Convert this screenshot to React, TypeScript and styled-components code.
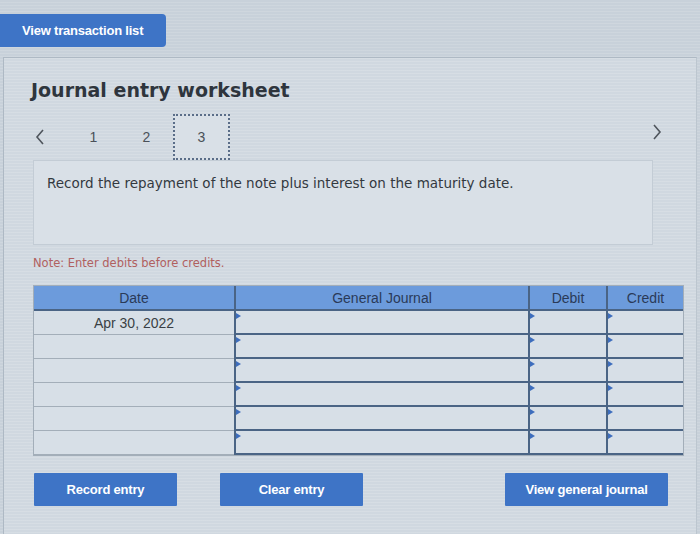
import { FC, Fragment } from "react";
import styled, { createGlobalStyle } from "styled-components";

const palette = {
  page: "#c8d1da",
  panel: "#d0d8e0",
  panelBorder: "#aeb9c4",
  box: "#d9e0e7",
  cell: "#d7dfe7",
  blue: "#3e74c6",
  header: "#6c9bdc",
  headerText: "#2a3a58",
  darkLine: "#4a6485",
  lightLine: "#a3aeb9",
  text: "#33393f",
};

const GlobalStyle = createGlobalStyle`
  html, body {
    margin: 0;
    padding: 0;
    background: ${palette.page};
    font-family: "DejaVu Sans", Verdana, sans-serif;
  }
`;

const Page = styled.div`
  width: 700px;
  height: 534px;
  overflow: hidden;
  padding-top: 14px;
  box-sizing: border-box;
  background: repeating-linear-gradient(
      0deg,
      rgba(255, 255, 255, 0.12) 0 1px,
      transparent 1px 3px
    ),
    ${palette.page};
`;

const TopButton = styled.button`
  display: block;
  width: 166px;
  height: 33px;
  border: none;
  border-radius: 0 4px 4px 0;
  background: ${palette.blue};
  color: #fff;
  font-family: "Liberation Sans", Arial, sans-serif;
  font-weight: bold;
  font-size: 13px;
  letter-spacing: -0.2px;
  text-align: left;
  padding: 0 0 0 22px;
`;

const Panel = styled.section`
  margin: 10px 0 0 3px;
  width: 694px;
  height: 480px;
  box-sizing: border-box;
  border: 1px solid ${palette.panelBorder};
  border-right-color: #bcc6cf;
  background: repeating-linear-gradient(
      0deg,
      rgba(255, 255, 255, 0.14) 0 1px,
      transparent 1px 3px
    ),
    ${palette.panel};
  padding: 20px 12px 0 29px;
`;

const Title = styled.h2`
  margin: 0 0 0 -2px;
  font-size: 19px;
  line-height: 24px;
  font-weight: bold;
  color: #2e353d;
`;

const NavRow = styled.div`
  display: flex;
  align-items: center;
  height: 46px;
  margin-top: 12px;
`;

const Chevron = styled.div<{ $right?: boolean }>`
  display: flex;
  align-items: center;
  width: 34px;
  height: 100%;
  padding-left: 2px;
  box-sizing: border-box;
  ${(p) => p.$right && "margin-left: auto; width: auto; padding: 0 22px 10px 0;"}
`;

const Step = styled.div<{ $active?: boolean }>`
  display: flex;
  align-items: center;
  justify-content: center;
  width: ${(p) => (p.$active ? "57px" : "53px")};
  height: 100%;
  box-sizing: border-box;
  font-family: "Liberation Sans", Arial, sans-serif;
  font-size: 14px;
  color: #4a5058;
  border: ${(p) => (p.$active ? "2px dotted #5a6d88" : "none")};
  background: ${(p) => (p.$active ? "#d9e0e7" : "transparent")};
`;

const PromptBox = styled.div`
  width: 620px;
  height: 85px;
  box-sizing: border-box;
  background: ${palette.box};
  border: 1px solid #c3ccd5;
  padding: 13px 13px;
  font-size: 13.5px;
  line-height: 18px;
  color: ${palette.text};
`;

const Note = styled.p`
  margin: 11px 0 0;
  font-size: 11.5px;
  line-height: 15px;
  color: #b0605f;
`;

const Table = styled.div`
  margin-top: 14px;
  width: 651px;
  box-sizing: border-box;
  display: grid;
  grid-template-columns: 200px 294px 78px 77px;
  grid-auto-rows: 24px;
  grid-template-rows: 25px;
  border: 1px solid ${palette.lightLine};
`;

const HeadCell = styled.div<{ $first?: boolean }>`
  display: flex;
  align-items: center;
  justify-content: center;
  background: ${palette.header};
  color: ${palette.headerText};
  font-family: "Liberation Sans", Arial, sans-serif;
  font-size: 14px;
  border-left: ${(p) => (p.$first ? "none" : `2px solid ${palette.darkLine}`)};
  border-bottom: 2px solid ${palette.darkLine};
`;

const DateCell = styled.div`
  display: flex;
  align-items: center;
  justify-content: center;
  background: ${palette.cell};
  border-bottom: 1px solid ${palette.lightLine};
  font-family: "Liberation Sans", Arial, sans-serif;
  font-size: 14px;
  color: #3a3f45;
`;

const EntryCell = styled.div`
  position: relative;
  background: ${palette.cell};
  border-left: 2px solid ${palette.darkLine};
  border-bottom: 2px solid ${palette.darkLine};

  &::before {
    content: "";
    position: absolute;
    left: 0;
    top: 2px;
    border-top: 3px solid transparent;
    border-bottom: 3px solid transparent;
    border-left: 5px solid #3d6dbd;
  }
`;

const ButtonRow = styled.div`
  display: flex;
  align-items: center;
  justify-content: space-between;
  width: 634px;
  margin: 17px 0 0 1px;
`;

const ButtonGroup = styled.div`
  display: flex;
  gap: 43px;
`;

const ActionButton = styled.button<{ $wide?: boolean }>`
  width: ${(p) => (p.$wide ? "163px" : "143px")};
  height: 33px;
  border: none;
  border-radius: 1px;
  background: ${palette.blue};
  color: #fff;
  font-family: "Liberation Sans", Arial, sans-serif;
  font-weight: bold;
  font-size: 13px;
  letter-spacing: -0.2px;
`;

const ChevronIcon: FC<{ right?: boolean }> = ({ right }) => (
  <svg width="10" height="16" viewBox="0 0 10 16">
    <polyline
      points={right ? "2,1 8,8 2,15" : "8,1 2,8 8,15"}
      fill="none"
      stroke="#4f555c"
      strokeWidth="1.6"
    />
  </svg>
);

const rows = ["Apr 30, 2022", "", "", "", "", ""];

export default function App() {
  return (
    <Page>
      <GlobalStyle />
      <TopButton>View transaction list</TopButton>
      <Panel>
        <Title>Journal entry worksheet</Title>
        <NavRow>
          <Chevron>
            <ChevronIcon />
          </Chevron>
          <Step>1</Step>
          <Step>2</Step>
          <Step $active>3</Step>
          <Chevron $right>
            <ChevronIcon right />
          </Chevron>
        </NavRow>
        <PromptBox>
          Record the repayment of the note plus interest on the maturity date.
        </PromptBox>
        <Note>Note: Enter debits before credits.</Note>
        <Table>
          <HeadCell $first>Date</HeadCell>
          <HeadCell>General Journal</HeadCell>
          <HeadCell>Debit</HeadCell>
          <HeadCell>Credit</HeadCell>
          {rows.map((date, i) => (
            <Fragment key={i}>
              <DateCell>{date}</DateCell>
              <EntryCell />
              <EntryCell />
              <EntryCell />
            </Fragment>
          ))}
        </Table>
        <ButtonRow>
          <ButtonGroup>
            <ActionButton>Record entry</ActionButton>
            <ActionButton>Clear entry</ActionButton>
          </ButtonGroup>
          <ActionButton $wide>View general journal</ActionButton>
        </ButtonRow>
      </Panel>
    </Page>
  );
}
